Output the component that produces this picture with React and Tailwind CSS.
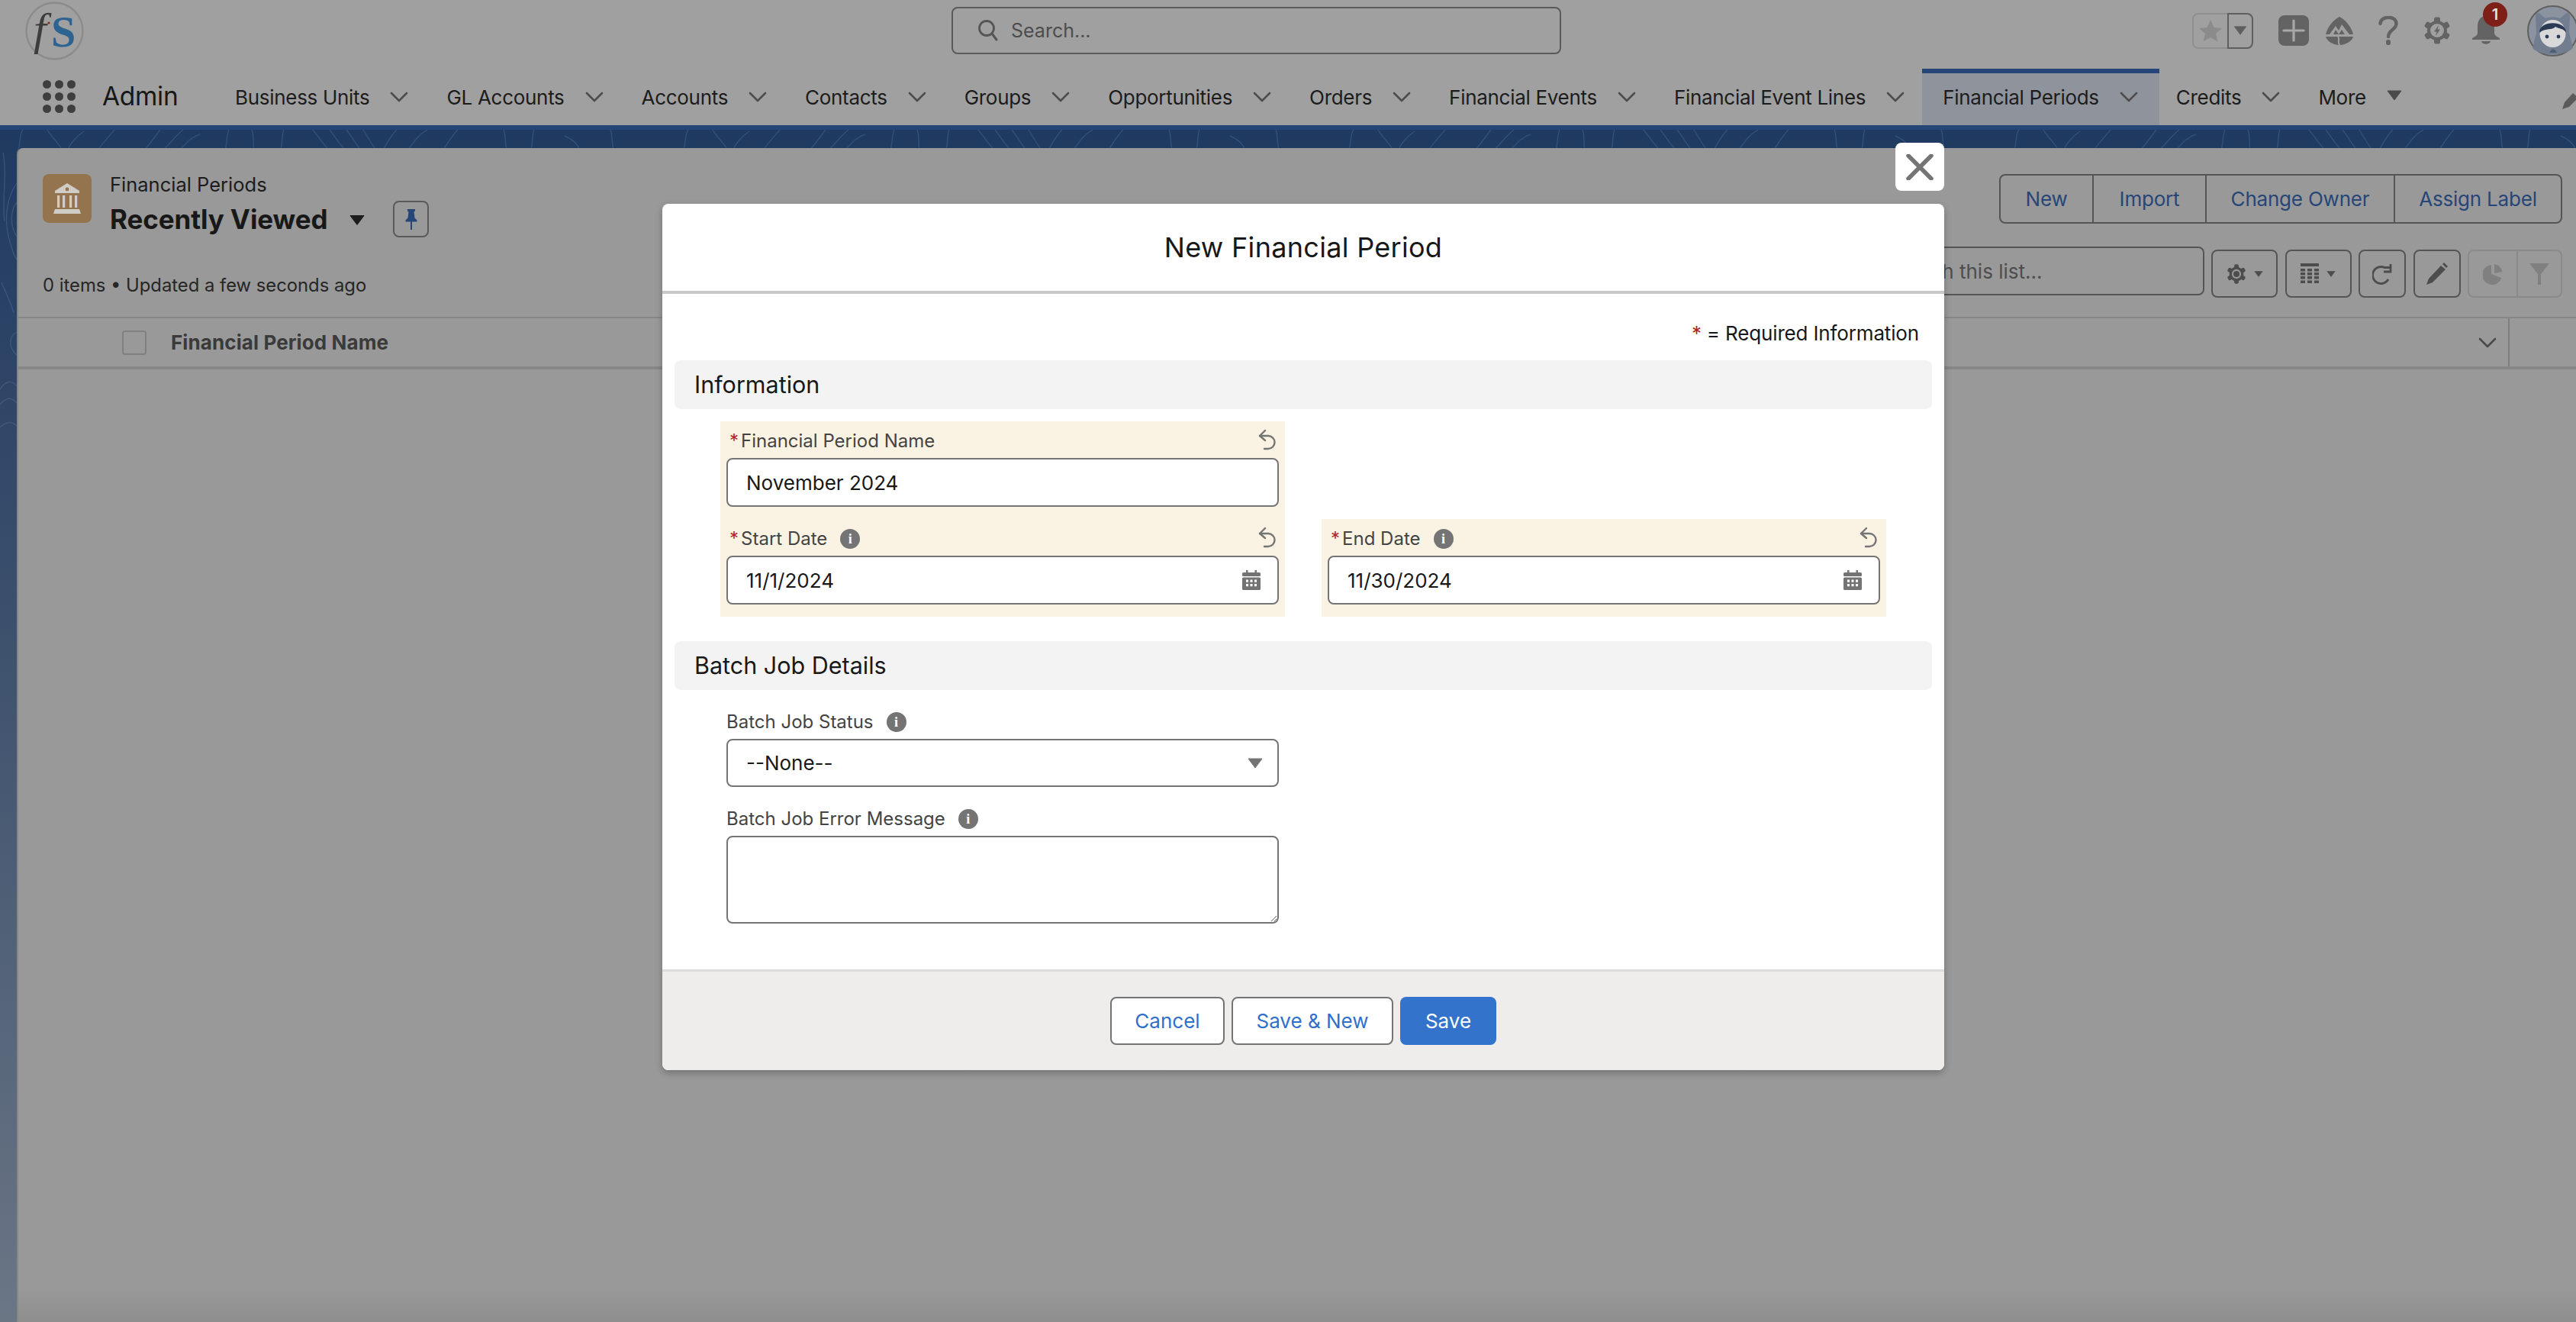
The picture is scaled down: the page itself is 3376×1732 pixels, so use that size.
import React from "react";

const TABS = ["Business Units","GL Accounts","Accounts","Contacts","Groups","Opportunities","Orders","Financial Events","Financial Event Lines","Financial Periods","Credits"];

function Chevron({ c = "#4d4d4d", w = 24, h = 14 }) {
  return <svg width={w} height={h} viewBox="0 0 24 14" className="shrink-0"><polyline points="2,2 12,12 22,2" fill="none" stroke={c} strokeWidth="2.6" strokeLinecap="round" strokeLinejoin="round"/></svg>;
}
function Tri({ c = "#5a5a5a", w = 20, h = 14 }) {
  return <svg width={w} height={h} viewBox="0 0 20 14" className="shrink-0"><polygon points="1,1 19,1 10,13" fill={c} stroke={c} strokeLinejoin="round"/></svg>;
}
function GearShape({ size, c, children }) {
  const teeth = [0,60,120,180,240,300];
  return (
    <svg width={size} height={size} viewBox="0 0 36 36" className="shrink-0">
      {teeth.map(r => <rect key={r} x="14" y="0.5" width="8" height="8" rx="2.5" fill={c} transform={`rotate(${r} 18 18)`}/>)}
      <circle cx="18" cy="18" r="13" fill={c}/>
      {children}
    </svg>
  );
}
function Info() {
  return <span className="ml-[17px] inline-flex h-[26px] w-[26px] shrink-0 items-center justify-center rounded-full bg-[#747474] font-['Liberation_Serif',serif] text-[18px] leading-none font-bold text-white">i</span>;
}
function Calendar() {
  return (
    <svg width="24" height="26" viewBox="0 0 24 26" className="shrink-0">
      <rect x="5" y="0" width="2.5" height="5" fill="#747474"/><rect x="16.5" y="0" width="2.5" height="5" fill="#747474"/>
      <rect x="0" y="3" width="24" height="5" rx="1.5" fill="#747474"/>
      <rect x="0" y="9.5" width="24" height="16.5" rx="1.5" fill="#747474"/>
      {[5,10.5,16].map(x => [12.5,18].map(y => <rect key={x+"-"+y} x={x} y={y} width="3" height="3.2" fill="#fff"/>))}
    </svg>
  );
}
function UndoIcon() {
  return (
    <svg width="24" height="28" viewBox="0 0 24 28" className="mr-[4px] mt-[10px] shrink-0" fill="none" stroke="#747474" strokeWidth="2.4" strokeLinecap="round" strokeLinejoin="round">
      <path d="M10 2 L3 9 L10 15"/>
      <path d="M3 9 H14 A8 8 0 0 1 14 26 H9"/>
    </svg>
  );
}
function Label({ children, req, info }) {
  return (
    <div className="flex h-[48px] items-center pt-[4px] text-[24px] leading-none text-[#444444]">
      {req && <span className="ml-[4px] mr-[3px] text-[24px] text-[#b3261e]">*</span>}
      <span>{children}</span>
      {info && <Info/>}
    </div>
  );
}
function Field({ label, req, info, value, cal }) {
  return (
    <div className="flex h-[128px] flex-col bg-[#faf3e3] px-[8px]">
      <div className="flex h-[48px] items-start justify-between">
        <Label req={req} info={info}>{label}</Label>
        <UndoIcon/>
      </div>
      <div className="flex h-[64px] items-center justify-between rounded-[8px] border-2 border-[#747474] bg-white pl-[24px] pr-[22px] text-[26px] text-[#181818]">
        <span>{value}</span>
        {cal && <Calendar/>}
      </div>
    </div>
  );
}
function Section({ children }) {
  return <div className="flex h-[64px] items-center rounded-[8px] bg-[#f3f3f3] pl-[26px] text-[30.5px] text-[#181818]">{children}</div>;
}
function ToolBtn({ w, children }) {
  return <div className={`flex h-[63px] items-center justify-center gap-[10px] rounded-[8px] border-2 border-[#555555] ${w}`}>{children}</div>;
}
function Contours() {
  const base = ["M30 0 C24 10 28 20 22 30","M62 0 C66 8 74 14 80 24","M110 2 C98 10 92 18 88 28","M150 0 C140 12 132 20 126 30","M210 0 C202 10 196 20 186 30","M240 0 C228 10 222 20 210 30","M262 6 C250 10 244 18 236 26","M300 0 C296 10 298 20 294 30","M330 0 C334 10 330 20 334 30","M372 0 C368 10 372 20 366 30","M410 0 C418 10 426 22 434 30","M432 0 C440 10 446 22 456 30","M454 0 C462 10 468 22 476 30","M476 0 C484 12 488 22 496 30","M520 0 C510 10 506 20 500 30","M560 0 C546 8 540 20 532 30","M600 0 C590 10 586 20 578 30","M660 0 C664 10 660 20 666 30","M700 0 C696 10 700 20 694 30","M740 8 C750 12 756 18 760 26","M800 0 C804 10 800 20 806 30"];
  return (
    <svg className="absolute inset-0 h-full w-full" aria-hidden="true">
      {[0,872,1744,2616].map(o => (
        <g key={o} transform={`translate(${o} 0)`} fill="none" stroke="#3c5a82" strokeWidth="1.4" strokeOpacity="0.7">
          {base.map((d,i) => <path key={i} d={d}/>)}
        </g>
      ))}
      <g fill="none" stroke="#5f7896" strokeWidth="1.3" strokeOpacity="0.4">
        <path d="M22 70 C8 90 4 120 14 150 C18 165 22 170 22 170"/>
        <path d="M22 95 C14 105 12 125 22 140"/>
        <path d="M4 30 C10 60 2 90 6 120"/>
        <path d="M2 200 C8 215 14 225 18 240"/>
        <path d="M22 265 C12 270 10 285 22 295"/>
        <path d="M0 340 C8 328 16 328 22 336"/>
        <path d="M0 360 C8 350 16 350 22 358"/>
        <path d="M0 390 C8 382 16 382 22 388"/>
      </g>
    </svg>
  );
}

export default function App() {
  return (
    <div className="relative flex h-[1732px] w-[3376px] flex-col overflow-hidden bg-[#999999] font-[Inter,sans-serif] text-[#1c1c1c]">
      {/* top bar */}
      <header className="bg-[#a0a0a0]">
        <div className="flex h-[80px] items-center">
          <div className="w-[1247px] pl-[33px]">
            <svg width="77" height="77" viewBox="0 0 77 77">
              <circle cx="38.5" cy="38.5" r="37" fill="none" stroke="#8b8b8b" strokeWidth="2.4"/>
              <text x="11" y="56" fontFamily="Liberation Serif, serif" fontStyle="italic" fontSize="60" fill="#3d3d3d">f</text>
              <text x="34" y="59" fontFamily="Liberation Serif, serif" fontWeight="700" fontSize="58" fill="#2c6390">S</text>
              <circle cx="31" cy="28" r="1.6" fill="#8c2a22"/>
            </svg>
          </div>
          <div className="flex h-[62px] w-[799px] items-center rounded-[8px] border-2 border-[#5a5a5a] pl-[32px] text-[25px] text-[#4d4d4d]">
            <svg width="28" height="30" viewBox="0 0 28 30" className="mr-[16px] shrink-0"><circle cx="12" cy="12" r="9.5" fill="none" stroke="#555" strokeWidth="2.8"/><line x1="19" y1="19" x2="25" y2="27" stroke="#555" strokeWidth="3" strokeLinecap="round"/></svg>
            <span className="pt-[2px]">Search...</span>
          </div>
          <div className="-mr-[3px] flex flex-1 items-center justify-end">
            <div className="flex h-[47px] w-[80px] shrink-0">
              <div className="flex w-[46px] items-center justify-center rounded-l-[8px] border-2 border-r-0 border-[#8f8f8f]">
                <svg width="32" height="30" viewBox="0 0 32 30"><polygon points="16,1 20.5,11 31,12 23,19 25.5,29.5 16,24 6.5,29.5 9,19 1,12 11.500,11" fill="#8b8b8b"/></svg>
              </div>
              <div className="flex flex-1 items-center justify-center rounded-r-[8px] border-2 border-[#5f5f5f]"><Tri c="#5f5f5f" w="18" h="12"/></div>
            </div>
            <div className="relative ml-[33px] h-[40px] w-[40px] shrink-0 rounded-[8px] bg-[#636363]">
              <svg width="40" height="40" viewBox="0 0 40 40"><path d="M20 7v26M7 20h26" stroke="#a8a8a8" strokeWidth="3.2" strokeLinecap="round"/></svg>
            </div>
            <svg width="38" height="38" viewBox="0 0 38 38" className="ml-[21px] shrink-0">
              <path d="M19 1 C27 5 34 13 37 24 L1 24 C4 13 11 5 19 1Z" fill="#636363"/>
              <path d="M6 24 L14 13 L18 19 L22 11 L32 24 L26 24 L22 18 L18 24 L14 18 L11 24Z" fill="#a0a0a0"/>
              <path d="M1 27 L37 27 C36 32 28 38 19 38 C10 38 2 32 1 27Z" fill="#636363"/>
              <path d="M17 27 C20 30 16 32 19 38" fill="none" stroke="#a0a0a0" strokeWidth="2"/>
            </svg>
            <svg width="26" height="38" viewBox="0 0 26 38" className="ml-[32px] shrink-0">
              <path d="M2.500 10 C3 -1 23.500 -1 23.500 10 C23.500 18 13 18 13 27" fill="none" stroke="#636363" strokeWidth="4.4" strokeLinecap="round"/>
              <rect x="10" y="31" width="6" height="7" rx="2.5" fill="#636363"/>
            </svg>
            <div className="ml-[33px] shrink-0">
              <GearShape size={36} c="#636363"><circle cx="18" cy="18" r="9" fill="#a0a0a0"/><polygon points="20,11 14,19.500 17.500,19.500 16,25 22,16.500 18.500,16.500" fill="#636363"/></GearShape>
            </div>
            <div className="relative ml-[27px] h-[38px] w-[38px] shrink-0">
              <svg width="38" height="38" viewBox="0 0 38 38">
                <path d="M19 0 C27 0 30 7 30 14 L30 22 C30 25 33 27 37 29 L37 31 L1 31 L1 29 C5 27 8 25 8 22 L8 14 C8 7 11 0 19 0Z" fill="#636363"/>
                <path d="M13 33 L25 33 C24 38 14 38 13 33Z" fill="#636363"/>
              </svg>
              <span className="absolute -top-[18px] left-[15px] flex h-[32px] w-[32px] items-center justify-center rounded-full bg-[#7e2018] text-[20px] leading-none font-semibold text-[#e4e4e4]">1</span>
            </div>
            <svg width="67" height="67" viewBox="0 0 67 67" className="ml-[35px] shrink-0">
              <circle cx="33.500" cy="33.500" r="32.500" fill="#8b93a0" stroke="#5f5f5f" strokeWidth="2"/>
              <path d="M12 36 L11 13 C12 9 16 9 19 13 L24 17 C29 15 38 15 43 17 L48 13 C51 9 55 9 56 13 L55 36 L60 56 C50 67 17 67 7 56Z" fill="#727d90"/>
              <ellipse cx="33.500" cy="37" rx="17" ry="18" fill="#d9d9d9"/>
              <path d="M16 36 C15 19 52 19 51 36 C48 30 42 31 37 28 C33 33 24 29 16 36Z" fill="#2c3a55"/>
              <circle cx="26" cy="41" r="2.400" fill="#2c3a55"/><circle cx="41" cy="41" r="2.400" fill="#2c3a55"/>
              <path d="M29 62 C32 56 36 56 39 62Z" fill="#4f5d75"/>
            </svg>
          </div>
        </div>
        <nav className="flex h-[84px] items-end pl-[56px] tracking-[-0.3px]">
          <div className="flex h-[74px] items-center pb-[2px]">
            <div className="grid w-[43px] grid-cols-3 gap-[5px]">
              {Array.from({ length: 9 }).map((_, i) => <span key={i} className="h-[11px] w-[11px] rounded-full bg-[#3e3e3e]"/>)}
            </div>
            <div className="ml-[35px] w-[150px] pt-[2px] text-[33.5px] leading-none text-[#181818]">Admin</div>
          </div>
          {TABS.map(t => {
            const active = t === "Financial Periods";
            return (
              <div key={t} className={active
                ? "-ml-[3px] -mr-[2px] flex h-[74px] items-center border-t-[6px] border-[#264678] bg-[#8f949c] pb-[6px] pl-[27px] pr-[28px] text-[26px]"
                : "flex h-[74px] items-center pl-[24px] pr-[26px] text-[26px]"}>
                <span className="text-[#1c1c1c]">{t}</span>
                <span className="ml-[27px]"><Chevron/></span>
              </div>
            );
          })}
          <div className="flex h-[74px] items-center pl-[24px] text-[26px]">
            <span>More</span>
            <span className="ml-[27px] -mt-[4px]"><Tri c="#4a4a4a"/></span>
          </div>
          <svg width="24" height="24" viewBox="0 0 24 24" className="mb-[20px] ml-auto -mr-[4px]"><path d="M2 23 L5 14 L16 2 L23 8 L11 20Z" fill="#5a5a5a"/></svg>
        </nav>
      </header>
      <div className="h-[6px] bg-[#264678]"/>

      {/* page */}
      <main className="relative flex-1 bg-[linear-gradient(180deg,#1f3a60_0%,#3f526e_45%,#6b7685_100%)] pt-[24px] pl-[22px]">
        <Contours/>
        <div className="relative flex h-full flex-col rounded-tl-[8px] border-l-2 border-[#878787] bg-linear-to-b from-[#999999] via-[#999999] via-[97%] to-[#8e8e8e]">
          <div className="flex h-[129px] justify-between pt-[34px] pr-[18px]">
            <div className="flex pl-[32px]">
              <div className="flex h-[64px] w-[64px] items-center justify-center rounded-[8px] bg-[#94744f]">
                <svg width="38" height="40" viewBox="0 0 38 40">
                  <path d="M19 0 L35 10 L35 13 L3 13 L3 10Z" fill="#d0ccc6"/>
                  <circle cx="19" cy="8" r="2.400" fill="#94744f"/>
                  {[6,13,22,29].map(x => <rect key={x} x={x} y="16" width="3.200" height="16" fill="#d0ccc6"/>)}
                  <path d="M3 34 L35 34 L37 40 L1 40Z" fill="#d0ccc6"/>
                </svg>
              </div>
              <div className="ml-[24px]">
                <div className="flex h-[28px] items-center text-[25.5px] leading-none">Financial Periods</div>
                <div className="mt-[12px] flex h-[38px] items-center">
                  <span className="text-[35px] leading-none font-bold tracking-[-0.1px] text-[#181818]">Recently Viewed</span>
                  <span className="ml-[29px] mt-[2px]"><Tri c="#1c1c1c" w="20" h="15"/></span>
                  <div className="ml-[37px] flex h-[48px] w-[47px] shrink-0 items-center justify-center rounded-[8px] border-2 border-[#5a5a5a]">
                    <svg width="16" height="28" viewBox="0 0 16 28"><path d="M3 1h10v2.500l-1.500 1 1 8 3 3v2H0.500v-2l3-3 1-8L3 3.500Z" fill="#264678"/><rect x="7" y="17" width="2" height="11" fill="#264678"/></svg>
                  </div>
                </div>
              </div>
            </div>
            <div className="flex h-[65px] rounded-[8px] border-2 border-[#555555] text-[26px] tracking-[-0.2px] text-[#264678]">
              {[["New","w-[120px]"],["Import","w-[148px]"],["Change Owner","w-[247px]"],["Assign Label","w-[219px]"]].map(([t,w],i) => (
                <div key={t} className={`flex items-center justify-center ${w} ${i ? "border-l-2 border-[#555555]" : ""}`}>{t}</div>
              ))}
            </div>
          </div>
          <div className="flex h-[67px] items-end justify-between pr-[18px]">
            <div className="flex h-[32px] items-center pl-[32px] text-[23.8px] leading-none text-[#262626]">0 items • Updated a few seconds ago</div>
            <div className="flex items-end gap-[9.5px]">
              <div className="mb-[3px] flex h-[64px] w-[500px] items-center justify-end rounded-[8px] border-2 border-[#555555] pr-[210px] text-[26px] text-[#4d4d4d]">Search this list...</div>
              <ToolBtn w="w-[87px]">
                <GearShape size={26} c="#4d4d4d"><circle cx="18" cy="18" r="8.500" fill="#999999"/><circle cx="18" cy="18" r="5.500" fill="#4d4d4d"/></GearShape>
                <Tri c="#4d4d4d" w="12" h="8"/>
              </ToolBtn>
              <ToolBtn w="w-[87px]">
                <svg width="24" height="28" viewBox="0 0 24 28">
                  <rect x="0" y="0" width="24" height="4" fill="#4d4d4d"/>
                  {[7,12,17,22.500].map(y => [0,9,18].map(x => <rect key={x+"-"+y} x={x} y={y} width="6" height="3.500" fill="#4d4d4d"/>))}
                </svg>
                <Tri c="#4d4d4d" w="12" h="8"/>
              </ToolBtn>
              <ToolBtn w="w-[62px]">
                <svg width="26" height="28" viewBox="0 0 26 28"><path d="M21 21 A11 11 0 1 1 16 5.500 L24 5.500" fill="none" stroke="#4d4d4d" strokeWidth="2.800"/><path d="M24 1 V11 H15" fill="none" stroke="#4d4d4d" strokeWidth="2.800"/></svg>
              </ToolBtn>
              <ToolBtn w="w-[62px]">
                <svg width="28" height="30" viewBox="0 0 28 30"><path d="M0 29 L3 21 L19 4 L25 9 L8 26Z" fill="#4d4d4d"/><path d="M21 2 L23 0 L28 5 L26 7Z" fill="#4d4d4d"/></svg>
              </ToolBtn>
              <div className="flex h-[63px] w-[124px] rounded-[8px] border-2 border-[#8a8a8a]">
                <div className="flex w-[62px] items-center justify-center">
                  <svg width="26" height="28" viewBox="0 0 26 28"><path d="M11 2 A13 13 0 1 0 24.500 19 L11 14 Z" fill="#808080"/><path d="M15 1 A13 13 0 0 1 25.500 11 L15 13Z" fill="#808080"/></svg>
                </div>
                <div className="flex flex-1 items-center justify-center border-l-2 border-[#8a8a8a]">
                  <svg width="26" height="28" viewBox="0 0 26 28"><path d="M0 0 H26 L15 14 V28 H11 V14Z" fill="#808080"/></svg>
                </div>
              </div>
            </div>
          </div>
          <div className="mt-[25px] flex h-[69px] items-center border-t-2 border-b-[4px] border-[#878787]">
            <span className="ml-[136px] h-[32px] w-[32px] shrink-0 rounded-[4px] border-2 border-[#808080]"/>
            <span className="ml-[32px] text-[26px] font-bold tracking-[0.1px] text-[#3a3a3a]">Financial Period Name</span>
            <span className="ml-auto mr-[15px]"><Chevron c="#4a4a4a"/></span>
            <span className="h-full w-[2px] bg-[#808080]"/>
            <span className="w-[87px]"/>
          </div>
        </div>
      </main>

      {/* modal */}
      <button className="absolute left-[2484px] top-[187px] flex h-[63px] w-[64px] items-center justify-center rounded-[8px] bg-white">
        <svg width="36" height="34" viewBox="0 0 36 34"><path d="M3 2 L33 32 M33 2 L3 32" stroke="#747474" strokeWidth="5.500" strokeLinecap="round"/></svg>
      </button>
      <section className="absolute left-[868px] top-[267px] flex h-[1135px] w-[1680px] flex-col rounded-[8px] bg-white shadow-[0_4px_10px_rgba(0,0,0,0.25)]">
        <div className="flex h-[118px] items-center justify-center border-b-[4px] border-[#c9c9c9] text-[36px] tracking-[0.3px] text-[#181818]">New Financial Period</div>
        <div className="flex-1 px-[16px] pt-[16px]">
          <div className="flex h-[71px] items-center justify-end pr-[17px] text-[26px] tracking-[-0.15px] text-[#181818]">
            <span className="mr-[7px] text-[#b3261e]">*</span>
            <span>= Required Information</span>
          </div>
          <Section>Information</Section>
          <div className="grid grid-cols-[740px_740px] gap-x-[48px] pt-[16px] pl-[60px]">
            <Field label="Financial Period Name" req value="November 2024"/>
            <div/>
            <Field label="Start Date" req info value="11/1/2024" cal/>
            <Field label="End Date" req info value="11/30/2024" cal/>
          </div>
          <div className="mt-[32px]"><Section>Batch Job Details</Section></div>
          <div className="ml-[60px] w-[740px] px-[8px] pt-[16px]">
            <Label info>Batch Job Status</Label>
            <div className="flex h-[63px] items-center justify-between rounded-[8px] border-2 border-[#747474] bg-white pl-[24px] pr-[19px] text-[26px] text-[#181818]">
              <span>--None--</span>
              <Tri c="#747474"/>
            </div>
            <div className="mt-[16px]"><Label info>Batch Job Error Message</Label></div>
            <textarea readOnly className="block h-[115px] w-full resize-y rounded-[8px] border-2 border-[#747474] bg-white"/>
          </div>
        </div>
        <div className="flex h-[132px] items-center justify-center gap-[9px] rounded-b-[8px] border-t-[3px] border-[#dcdcdc] bg-[#eeedeb] text-[26px]">
          <div className="flex h-[63px] w-[150px] items-center justify-center rounded-[8px] border-2 border-[#747474] bg-white text-[#2f70cb]">Cancel</div>
          <div className="flex h-[63px] w-[212px] items-center justify-center rounded-[8px] border-2 border-[#747474] bg-white text-[#2f70cb]">Save &amp; New</div>
          <div className="flex h-[63px] w-[126px] items-center justify-center rounded-[8px] bg-[#3373cc] text-white">Save</div>
        </div>
      </section>
    </div>
  );
}
